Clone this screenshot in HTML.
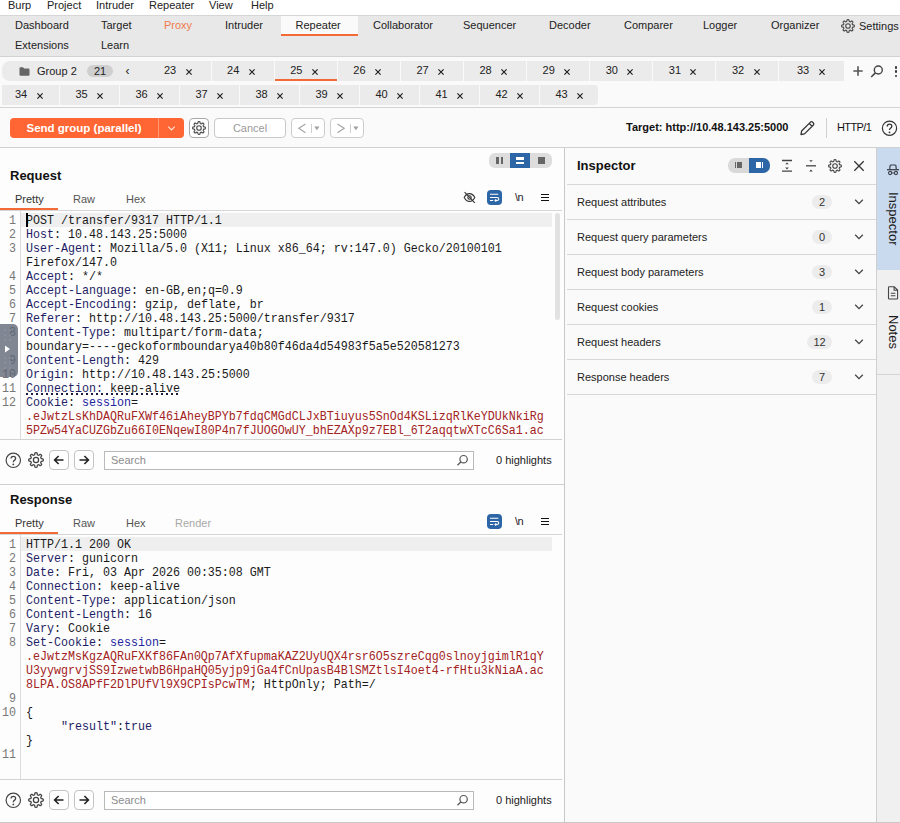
<!DOCTYPE html>
<html><head><meta charset="utf-8">
<style>
*{box-sizing:border-box;margin:0;padding:0}
html,body{width:900px;height:823px;overflow:hidden;background:#fafafa}
body{position:relative;font-family:"Liberation Sans",sans-serif;font-size:11px;color:#222}
.a{position:absolute;white-space:nowrap}
.t{position:absolute;white-space:nowrap;line-height:13px}
#menu{left:0;top:0;width:900px;height:15px;background:#fff}
#maintabs{left:0;top:15px;width:900px;height:42px;background:#e8e8e8;border-top:1px solid #d6d6d6;border-bottom:1px solid #d2d2d2}
#reptabs{left:0;top:57px;width:900px;height:51px;background:#fafafa;border-bottom:1px solid #d4d4d4}
.rt{position:absolute;height:20px;background:#ebebeb}
.rt span{position:absolute;top:3px;font-size:11px;color:#222}
.rt.sel{border-bottom:2px solid #f26a35}
.rt i{position:absolute;top:4px;font-style:normal;font-size:12px;color:#222;margin-left:-0.5px}
#toolbar{left:0;top:108px;width:900px;height:40px;background:#fafafa;border-bottom:1px solid #d0d0d0}
.code{font-family:"Liberation Mono",monospace;font-size:11.67px;line-height:14px;color:#1a1a1a;transform:scaleY(1.05);transform-origin:0 10.1px}
.hn{color:#1e1e66}
.dot{text-decoration:underline dotted #1b1b6b;text-underline-offset:2px}
.sv{color:#2424a0}
.cv{color:#a32222}
.ln{position:absolute;font-family:"Liberation Mono",monospace;font-size:11.67px;line-height:14px;color:#777;text-align:right;width:16px;left:0}
</style></head><body>
<svg width="0" height="0" style="position:absolute">
<symbol id="xx" viewBox="0 0 6 6"><path d="M0.4 0.4 L5.6 5.6 M5.6 0.4 L0.4 5.6" stroke="#1e1e1e" stroke-width="1.15"/></symbol>
<symbol id="gear" viewBox="0 0 24 24"><path d="M12.00 1.10 L12.29 1.11 L12.57 1.13 L12.85 1.16 L13.13 1.24 L13.40 1.39 L13.63 1.73 L13.79 2.34 L13.89 3.12 L13.98 3.74 L14.12 4.08 L14.29 4.25 L14.48 4.36 L14.67 4.45 L14.87 4.53 L15.06 4.61 L15.25 4.69 L15.45 4.77 L15.65 4.84 L15.86 4.90 L16.10 4.90 L16.44 4.76 L16.94 4.39 L17.57 3.90 L18.11 3.58 L18.51 3.51 L18.81 3.59 L19.06 3.74 L19.29 3.91 L19.50 4.10 L19.71 4.29 L19.90 4.50 L20.09 4.71 L20.26 4.94 L20.41 5.19 L20.49 5.49 L20.42 5.89 L20.10 6.43 L19.61 7.06 L19.24 7.56 L19.10 7.90 L19.10 8.14 L19.16 8.35 L19.23 8.55 L19.31 8.75 L19.39 8.94 L19.47 9.13 L19.55 9.33 L19.64 9.52 L19.75 9.71 L19.92 9.88 L20.26 10.02 L20.88 10.11 L21.66 10.21 L22.27 10.37 L22.61 10.60 L22.76 10.87 L22.84 11.15 L22.87 11.43 L22.89 11.71 L22.90 12.00 L22.89 12.29 L22.87 12.57 L22.84 12.85 L22.76 13.13 L22.61 13.40 L22.27 13.63 L21.66 13.79 L20.88 13.89 L20.26 13.98 L19.92 14.12 L19.75 14.29 L19.64 14.48 L19.55 14.67 L19.47 14.87 L19.39 15.06 L19.31 15.25 L19.23 15.45 L19.16 15.65 L19.10 15.86 L19.10 16.10 L19.24 16.44 L19.61 16.94 L20.10 17.57 L20.42 18.11 L20.49 18.51 L20.41 18.81 L20.26 19.06 L20.09 19.29 L19.90 19.50 L19.71 19.71 L19.50 19.90 L19.29 20.09 L19.06 20.26 L18.81 20.41 L18.51 20.49 L18.11 20.42 L17.57 20.10 L16.94 19.61 L16.44 19.24 L16.10 19.10 L15.86 19.10 L15.65 19.16 L15.45 19.23 L15.25 19.31 L15.06 19.39 L14.87 19.47 L14.67 19.55 L14.48 19.64 L14.29 19.75 L14.12 19.92 L13.98 20.26 L13.89 20.88 L13.79 21.66 L13.63 22.27 L13.40 22.61 L13.13 22.76 L12.85 22.84 L12.57 22.87 L12.29 22.89 L12.00 22.90 L11.71 22.89 L11.43 22.87 L11.15 22.84 L10.87 22.76 L10.60 22.61 L10.37 22.27 L10.21 21.66 L10.11 20.88 L10.02 20.26 L9.88 19.92 L9.71 19.75 L9.52 19.64 L9.33 19.55 L9.13 19.47 L8.94 19.39 L8.75 19.31 L8.55 19.23 L8.35 19.16 L8.14 19.10 L7.90 19.10 L7.56 19.24 L7.06 19.61 L6.43 20.10 L5.89 20.42 L5.49 20.49 L5.19 20.41 L4.94 20.26 L4.71 20.09 L4.50 19.90 L4.29 19.71 L4.10 19.50 L3.91 19.29 L3.74 19.06 L3.59 18.81 L3.51 18.51 L3.58 18.11 L3.90 17.57 L4.39 16.94 L4.76 16.44 L4.90 16.10 L4.90 15.86 L4.84 15.65 L4.77 15.45 L4.69 15.25 L4.61 15.06 L4.53 14.87 L4.45 14.67 L4.36 14.48 L4.25 14.29 L4.08 14.12 L3.74 13.98 L3.12 13.89 L2.34 13.79 L1.73 13.63 L1.39 13.40 L1.24 13.13 L1.16 12.85 L1.13 12.57 L1.11 12.29 L1.10 12.00 L1.11 11.71 L1.13 11.43 L1.16 11.15 L1.24 10.87 L1.39 10.60 L1.73 10.37 L2.34 10.21 L3.12 10.11 L3.74 10.02 L4.08 9.88 L4.25 9.71 L4.36 9.52 L4.45 9.33 L4.53 9.13 L4.61 8.94 L4.69 8.75 L4.77 8.55 L4.84 8.35 L4.90 8.14 L4.90 7.90 L4.76 7.56 L4.39 7.06 L3.90 6.43 L3.58 5.89 L3.51 5.49 L3.59 5.19 L3.74 4.94 L3.91 4.71 L4.10 4.50 L4.29 4.29 L4.50 4.10 L4.71 3.91 L4.94 3.74 L5.19 3.59 L5.49 3.51 L5.89 3.58 L6.43 3.90 L7.06 4.39 L7.56 4.76 L7.90 4.90 L8.14 4.90 L8.35 4.84 L8.55 4.77 L8.75 4.69 L8.94 4.61 L9.13 4.53 L9.33 4.45 L9.52 4.36 L9.71 4.25 L9.88 4.08 L10.02 3.74 L10.11 3.12 L10.21 2.34 L10.37 1.73 L10.60 1.39 L10.87 1.24 L11.15 1.16 L11.43 1.13 L11.71 1.11Z" fill="none" stroke="#444" stroke-width="1.9" stroke-linejoin="round"/><circle cx="12" cy="12" r="3.9" fill="none" stroke="#444" stroke-width="1.9"/></symbol>
</svg>


<!-- menu bar -->
<div class="a" id="menu">
  <div class="t" style="left:8px;top:-1px">Burp</div>
  <div class="t" style="left:47px;top:-1px">Project</div>
  <div class="t" style="left:96px;top:-1px">Intruder</div>
  <div class="t" style="left:149px;top:-1px">Repeater</div>
  <div class="t" style="left:209px;top:-1px">View</div>
  <div class="t" style="left:251px;top:-1px">Help</div>
</div>

<!-- main tabs -->
<div class="a" id="maintabs">
  <div class="a" style="left:281px;top:0;width:77px;height:20px;background:#fafafa;border-bottom:2px solid #f26a35"></div>
  <div class="t" style="left:15px;top:3px">Dashboard</div>
  <div class="t" style="left:101px;top:3px">Target</div>
  <div class="t" style="left:164px;top:3px;color:#f07a4e">Proxy</div>
  <div class="t" style="left:225px;top:3px">Intruder</div>
  <div class="t" style="left:295.5px;top:3px">Repeater</div>
  <div class="t" style="left:373px;top:3px">Collaborator</div>
  <div class="t" style="left:463px;top:3px">Sequencer</div>
  <div class="t" style="left:549px;top:3px">Decoder</div>
  <div class="t" style="left:624px;top:3px">Comparer</div>
  <div class="t" style="left:703px;top:3px">Logger</div>
  <div class="t" style="left:771px;top:3px">Organizer</div>
  <div class="t" style="left:859px;top:4px">Settings</div>
  <div class="t" style="left:15px;top:23px">Extensions</div>
  <div class="t" style="left:101px;top:23px">Learn</div>
</div>

<!-- repeater tabs -->
<div class="a" id="reptabs"></div>
<div class="rt" style="left:2px;top:61px;width:146.5px;border-radius:8px 0 0 8px">
  <svg class="a" style="left:17px;top:6px" width="11" height="9" viewBox="0 0 11 9"><path d="M0.5 1.2 Q0.5 0.3 1.4 0.3 L4 0.3 L5.2 1.6 L9.6 1.6 Q10.5 1.6 10.5 2.5 L10.5 8 Q10.5 8.8 9.6 8.8 L1.4 8.8 Q0.5 8.8 0.5 8 Z" fill="#666"/></svg>
  <span style="left:35px;top:4px">Group 2</span>
  <div class="a" style="left:85px;top:4px;width:26px;height:12px;border-radius:6px;background:#cfcfcf"></div>
  <span style="left:92px;top:3.5px">21</span>
  <i style="left:124px;top:3px;font-size:12px">&#8249;</i>
</div>
<div class="rt" style="left:148.5px;top:61px;width:62.1px"><span style="left:15.5px">23</span><svg class="a" style="left:37.2px;top:8px" width="6" height="6"><use href="#xx"/></svg></div>
<div class="rt" style="left:211.6px;top:61px;width:62.1px"><span style="left:15.5px">24</span><svg class="a" style="left:37.2px;top:8px" width="6" height="6"><use href="#xx"/></svg></div>
<div class="rt sel" style="left:274.7px;top:61px;width:62.1px"><span style="left:15.5px">25</span><svg class="a" style="left:37.2px;top:8px" width="6" height="6"><use href="#xx"/></svg></div>
<div class="rt" style="left:337.8px;top:61px;width:62.1px"><span style="left:15.5px">26</span><svg class="a" style="left:37.2px;top:8px" width="6" height="6"><use href="#xx"/></svg></div>
<div class="rt" style="left:400.9px;top:61px;width:62.1px"><span style="left:15.5px">27</span><svg class="a" style="left:37.2px;top:8px" width="6" height="6"><use href="#xx"/></svg></div>
<div class="rt" style="left:464.0px;top:61px;width:62.1px"><span style="left:15.5px">28</span><svg class="a" style="left:37.2px;top:8px" width="6" height="6"><use href="#xx"/></svg></div>
<div class="rt" style="left:527.1px;top:61px;width:62.1px"><span style="left:15.5px">29</span><svg class="a" style="left:37.2px;top:8px" width="6" height="6"><use href="#xx"/></svg></div>
<div class="rt" style="left:590.2px;top:61px;width:62.1px"><span style="left:15.5px">30</span><svg class="a" style="left:37.2px;top:8px" width="6" height="6"><use href="#xx"/></svg></div>
<div class="rt" style="left:653.3px;top:61px;width:62.1px"><span style="left:15.5px">31</span><svg class="a" style="left:37.2px;top:8px" width="6" height="6"><use href="#xx"/></svg></div>
<div class="rt" style="left:716.4px;top:61px;width:62.1px"><span style="left:15.5px">32</span><svg class="a" style="left:37.2px;top:8px" width="6" height="6"><use href="#xx"/></svg></div>
<div class="rt" style="left:779px;top:61px;width:65px"><span style="left:18px">33</span><svg class="a" style="left:40.2px;top:8px" width="6" height="6"><use href="#xx"/></svg></div>
<div class="rt" style="left:2px;top:85px;width:57px"><span style="left:13px">34</span><svg class="a" style="left:35.2px;top:8px" width="6" height="6"><use href="#xx"/></svg></div>
<div class="rt" style="left:60px;top:85px;width:59px"><span style="left:15.5px">35</span><svg class="a" style="left:37.2px;top:8px" width="6" height="6"><use href="#xx"/></svg></div>
<div class="rt" style="left:120px;top:85px;width:59px"><span style="left:15.5px">36</span><svg class="a" style="left:37.2px;top:8px" width="6" height="6"><use href="#xx"/></svg></div>
<div class="rt" style="left:180px;top:85px;width:59px"><span style="left:15.5px">37</span><svg class="a" style="left:37.2px;top:8px" width="6" height="6"><use href="#xx"/></svg></div>
<div class="rt" style="left:240px;top:85px;width:59px"><span style="left:15.5px">38</span><svg class="a" style="left:37.2px;top:8px" width="6" height="6"><use href="#xx"/></svg></div>
<div class="rt" style="left:300px;top:85px;width:59px"><span style="left:15.5px">39</span><svg class="a" style="left:37.2px;top:8px" width="6" height="6"><use href="#xx"/></svg></div>
<div class="rt" style="left:360px;top:85px;width:59px"><span style="left:15.5px">40</span><svg class="a" style="left:37.2px;top:8px" width="6" height="6"><use href="#xx"/></svg></div>
<div class="rt" style="left:420px;top:85px;width:59px"><span style="left:15.5px">41</span><svg class="a" style="left:37.2px;top:8px" width="6" height="6"><use href="#xx"/></svg></div>
<div class="rt" style="left:480px;top:85px;width:59px"><span style="left:15.5px">42</span><svg class="a" style="left:37.2px;top:8px" width="6" height="6"><use href="#xx"/></svg></div>
<div class="rt" style="left:540px;top:85px;width:58px;border-radius:0 4px 4px 0"><span style="left:15.5px">43</span><svg class="a" style="left:37.2px;top:8px" width="6" height="6"><use href="#xx"/></svg></div>
<svg class="a" style="left:853px;top:66px" width="10" height="10" viewBox="0 0 10 10"><path d="M5 0.3 V9.7 M0.3 5 H9.7" stroke="#555" stroke-width="1.6"/></svg>
<svg class="a" style="left:870px;top:65px" width="14" height="13" viewBox="0 0 14 13"><circle cx="8.3" cy="5" r="4" fill="none" stroke="#444" stroke-width="1.4"/><path d="M5.4 7.9 L1.2 12" stroke="#444" stroke-width="1.5"/></svg>
<div class="a" style="left:894.5px;top:66px;width:2.6px;height:2.6px;border-radius:2px;background:#333"></div>
<div class="a" style="left:894.5px;top:70.3px;width:2.6px;height:2.6px;border-radius:2px;background:#333"></div>
<div class="a" style="left:894.5px;top:74.6px;width:2.6px;height:2.6px;border-radius:2px;background:#333"></div>


<!-- toolbar -->
<div class="a" id="toolbar"></div>
<div class="a" style="left:10px;top:118px;width:174px;height:20px;background:#ff6633;border-radius:4px"></div>
<div class="a" style="left:158px;top:118px;width:1px;height:20px;background:#ff9a70"></div>
<div class="t" style="left:26.5px;top:122px;color:#fff;font-weight:bold;font-size:11.5px">Send group (parallel)</div>
<svg class="a" style="left:167px;top:125px" width="9" height="7" viewBox="0 0 9 7"><path d="M1.3 1.7 L4.5 4.9 L7.7 1.7" fill="none" stroke="#ffe8dc" stroke-width="1.1"/></svg>
<div class="a" style="left:189px;top:118px;width:20px;height:20px;border:1px solid #a8a8a8;border-radius:4px;background:#fff"></div>
<svg class="a" style="left:192px;top:121px" width="14" height="14"><use href="#gear"/></svg>
<div class="a" style="left:214px;top:118px;width:72px;height:20px;border:1px solid #c8c8c8;border-radius:4px;background:#fff"></div>
<div class="t" style="left:214px;top:122px;width:72px;text-align:center;color:#9a9a9a">Cancel</div>
<div class="a" style="left:291px;top:118px;width:34px;height:20px;border:1px solid #cdcdcd;border-radius:4px;background:#fff"></div>
<svg class="a" style="left:297px;top:123px" width="10" height="11" viewBox="0 0 10 11"><path d="M8.5 1 L1.8 5.3 L8.5 9.7" fill="none" stroke="#a6a6a6" stroke-width="1.2"/></svg>
<div class="a" style="left:311px;top:124px;width:1px;height:9px;background:#cfcfcf"></div>
<svg class="a" style="left:314px;top:126px" width="6" height="5" viewBox="0 0 6 5"><path d="M0.3 0.5 L5.5 0.5 L2.9 4.2Z" fill="#a0a0a0"/></svg>
<div class="a" style="left:330px;top:118px;width:34px;height:20px;border:1px solid #cdcdcd;border-radius:4px;background:#fff"></div>
<svg class="a" style="left:336px;top:123px" width="10" height="11" viewBox="0 0 10 11"><path d="M1.5 1 L8.2 5.3 L1.5 9.7" fill="none" stroke="#a6a6a6" stroke-width="1.2"/></svg>
<div class="a" style="left:350px;top:124px;width:1px;height:9px;background:#cfcfcf"></div>
<svg class="a" style="left:353px;top:126px" width="6" height="5" viewBox="0 0 6 5"><path d="M0.3 0.5 L5.5 0.5 L2.9 4.2Z" fill="#a0a0a0"/></svg>
<div class="t" style="left:626px;top:121px;font-weight:bold;color:#111">Target: http://10.48.143.25:5000</div>
<svg class="a" style="left:799px;top:120px" width="17" height="16" viewBox="0 0 17 16"><path d="M2 14.5 L2.6 11 L11.5 2.1 Q12.5 1.2 13.5 2.1 L14.4 3 Q15.3 4 14.4 5 L5.5 13.9 Z M10.2 3.4 L13.1 6.3" fill="none" stroke="#333" stroke-width="1.3" stroke-linejoin="round"/></svg>
<div class="a" style="left:826px;top:118px;width:1px;height:20px;background:#d0d0d0"></div>
<div class="t" style="left:837px;top:121px;color:#111;letter-spacing:-0.6px">HTTP/1</div>
<svg class="a" style="left:881px;top:120px" width="17" height="17" viewBox="0 0 17 17"><circle cx="8.5" cy="8.2" r="7.1" fill="none" stroke="#333" stroke-width="1.2"/><path d="M6.2 6.4 Q6.2 4.2 8.5 4.2 Q10.8 4.2 10.8 6.3 Q10.8 7.6 9.5 8.3 Q8.5 8.9 8.5 10" fill="none" stroke="#333" stroke-width="1.3"/><circle cx="8.5" cy="12.3" r="0.9" fill="#333"/></svg>



<div class="a" style="left:564px;top:148px;width:1px;height:675px;background:#c8c8c8"></div>
<div class="a" style="left:0;top:148px;width:564px;height:336px;background:#fdfdfd"></div>
<div class="a" style="left:0;top:485px;width:564px;height:337px;background:#fdfdfd"></div>
<div class="a" style="left:0;top:484px;width:564px;height:1px;background:#d0d0d0"></div>
<div class="a" style="left:0;top:822px;width:900px;height:1px;background:#c8c8c8"></div>
<!-- layout toggle -->
<div class="a" style="left:489px;top:153px;width:63px;height:15px;border-radius:6px;background:#dddddd;overflow:hidden"><div class="a" style="left:21px;top:0;width:20px;height:15px;background:#2c66a6"></div></div>
<div class="a" style="left:496px;top:157px;width:2.5px;height:7px;background:#666"></div>
<div class="a" style="left:500.5px;top:157px;width:2.5px;height:7px;background:#666"></div>
<div class="a" style="left:516px;top:157px;width:8px;height:2.5px;background:#fff"></div>
<div class="a" style="left:516px;top:161.5px;width:8px;height:2.5px;background:#fff"></div>
<div class="a" style="left:538px;top:157px;width:7px;height:7px;background:#666"></div>
<div class="t" style="left:10px;top:168px;font-size:13px;font-weight:bold;color:#111;line-height:15px">Request</div>
<div class="t" style="left:15px;top:193px;color:#333">Pretty</div>
<div class="t" style="left:73px;top:193px;color:#555">Raw</div>
<div class="t" style="left:126px;top:193px;color:#555">Hex</div>
<div class="a" style="left:0;top:208px;width:58px;height:2px;background:#f26a35"></div>
<div class="a" style="left:0;top:210px;width:562px;height:1px;background:#d6d6d6"></div>
<svg class="a" style="left:463px;top:191px" width="13" height="13" viewBox="0 0 13 13"><path d="M1.2 6.5 Q3.2 2.6 6.5 2.6 Q9.8 2.6 11.8 6.5 Q9.8 10.4 6.5 10.4 Q3.2 10.4 1.2 6.5Z" fill="none" stroke="#333" stroke-width="1.1"/><circle cx="6.5" cy="6.5" r="1.7" fill="none" stroke="#333" stroke-width="1.1"/><path d="M1.6 1.2 L11.8 11.8" stroke="#333" stroke-width="1.1"/></svg>

<div class="a" style="left:487px;top:190px;width:15px;height:15px;border-radius:4px;background:#2c66a6"></div>
<svg class="a" style="left:487px;top:190px" width="15" height="15" viewBox="0 0 15 15"><path d="M3 4.3 H11.3 M3 7.5 H10 Q11.8 7.5 11.8 9 Q11.8 10.5 10 10.5 H8 M9.2 9.3 L8 10.5 L9.2 11.7 M3 10.5 H6.2" fill="none" stroke="#fff" stroke-width="1.1"/></svg>
<div class="t" style="left:515px;top:191px;color:#222;font-size:11px;letter-spacing:-0.5px">\n</div>
<div class="a" style="left:541px;top:194px;width:7.5px;height:1px;background:#111"></div>
<div class="a" style="left:541px;top:197px;width:7.5px;height:1px;background:#111"></div>
<div class="a" style="left:541px;top:200px;width:7.5px;height:1px;background:#111"></div>
<div class="a" style="left:20px;top:211px;width:1px;height:228px;background:#dcdcdc"></div>
<div class="a" style="left:21px;top:213px;width:531px;height:14px;background:#efefef"></div>
<div class="ln code" style="top:214px">1</div>
<div class="a code" style="left:26px;top:214px;white-space:pre">POST /transfer/9317 HTTP/1.1</div>
<div class="ln code" style="top:228px">2</div>
<div class="a code" style="left:26px;top:228px;white-space:pre"><span class="hn">Host</span>: 10.48.143.25:5000</div>
<div class="ln code" style="top:242px">3</div>
<div class="a code" style="left:26px;top:242px;white-space:pre"><span class="hn">User-Agent</span>: Mozilla/5.0 (X11; Linux x86_64; rv:147.0) Gecko/20100101</div>
<div class="a code" style="left:26px;top:256px;white-space:pre">Firefox/147.0</div>
<div class="ln code" style="top:270px">4</div>
<div class="a code" style="left:26px;top:270px;white-space:pre"><span class="hn">Accept</span>: */*</div>
<div class="ln code" style="top:284px">5</div>
<div class="a code" style="left:26px;top:284px;white-space:pre"><span class="hn">Accept-Language</span>: en-GB,en;q=0.9</div>
<div class="ln code" style="top:298px">6</div>
<div class="a code" style="left:26px;top:298px;white-space:pre"><span class="hn">Accept-Encoding</span>: gzip, deflate, br</div>
<div class="ln code" style="top:312px">7</div>
<div class="a code" style="left:26px;top:312px;white-space:pre"><span class="hn">Referer</span>: http://10.48.143.25:5000/transfer/9317</div>
<div class="ln code" style="top:326px">8</div>
<div class="a code" style="left:26px;top:326px;white-space:pre"><span class="hn">Content-Type</span>: multipart/form-data;</div>
<div class="a code" style="left:26px;top:340px;white-space:pre">boundary=----geckoformboundarya40b80f46da4d54983f5a5e520581273</div>
<div class="ln code" style="top:354px">9</div>
<div class="a code" style="left:26px;top:354px;white-space:pre"><span class="hn">Content-Length</span>: 429</div>
<div class="ln code" style="top:368px">10</div>
<div class="a code" style="left:26px;top:368px;white-space:pre"><span class="hn">Origin</span>: http://10.48.143.25:5000</div>
<div class="ln code" style="top:382px">11</div>
<div class="a code" style="left:26px;top:382px;white-space:pre"><span class="hn">Connection:</span> keep-alive</div>
<div class="a" style="left:26px;top:393px;width:154px;height:2px;background:repeating-linear-gradient(90deg,#1c1c40 0 2px,transparent 2px 5px)"></div>
<div class="ln code" style="top:396px">12</div>
<div class="a code" style="left:26px;top:396px;white-space:pre"><span class="hn">Cookie</span>: <span class="sv">session</span>=</div>
<div class="a code" style="left:26px;top:410px;white-space:pre"><span class="cv">.eJwtzLsKhDAQRuFXWf46iAheyBPYb7fdqCMGdCLJxBTiuyus5SnOd4KSLizqRlKeYDUkNkiRg</span></div>
<div class="a code" style="left:26px;top:424px;white-space:pre"><span class="cv">5PZw54YaCUZGbZu66I0ENqewI80P4n7fJUOGOwUY_bhEZAXp9z7EBl_6T2aqqtwXTcC6Sa1.ac</span></div>

<div class="a" style="left:555px;top:213px;width:5px;height:107px;border-radius:3px;background:#e2e2e2"></div>

<div class="a" style="left:0;top:439px;width:562px;height:1px;background:#d2d2d2"></div>
<svg class="a" style="left:5px;top:452px" width="17" height="17" viewBox="0 0 17 17"><circle cx="8.3" cy="8.3" r="7.2" fill="none" stroke="#444" stroke-width="1.2"/><path d="M6 6.6 Q6 4.3 8.3 4.3 Q10.6 4.3 10.6 6.4 Q10.6 7.7 9.3 8.4 Q8.3 9 8.3 10.2" fill="none" stroke="#444" stroke-width="1.3"/><circle cx="8.3" cy="12.4" r="0.9" fill="#444"/></svg>
<svg class="a" style="left:27.6px;top:452.2px" width="16" height="16"><use href="#gear"/></svg>
<div class="a" style="left:49px;top:450px;width:20px;height:20px;border:1px solid #c4c4c4;border-radius:4px;background:#fff"></div>
<svg class="a" style="left:52px;top:453px" width="14" height="14" viewBox="0 0 14 14"><path d="M11.5 7 L2.6 7 M6.6 3 L2.6 7 L6.6 11" fill="none" stroke="#222" stroke-width="1.6"/></svg>
<div class="a" style="left:74px;top:450px;width:20px;height:20px;border:1px solid #c4c4c4;border-radius:4px;background:#fff"></div>
<svg class="a" style="left:77px;top:453px" width="14" height="14" viewBox="0 0 14 14"><path d="M2.5 7 L11.4 7 M7.4 3 L11.4 7 L7.4 11" fill="none" stroke="#222" stroke-width="1.6"/></svg>
<div class="a" style="left:104px;top:451px;width:370px;height:19px;border:1px solid #b9b9b9;background:#fff"></div>
<div class="t" style="left:111px;top:454px;color:#8c8c8c">Search</div>
<svg class="a" style="left:456px;top:454px" width="13" height="13" viewBox="0 0 13 13"><circle cx="7.6" cy="5.2" r="3.7" fill="none" stroke="#555" stroke-width="1.2"/><path d="M5 7.8 L1.5 11.3" stroke="#555" stroke-width="1.3"/></svg>
<div class="t" style="left:496px;top:454px;color:#222">0 highlights</div>

<div class="t" style="left:10px;top:492px;font-size:13px;font-weight:bold;color:#111;line-height:15px">Response</div>
<div class="t" style="left:15px;top:517px;color:#333">Pretty</div>
<div class="t" style="left:73px;top:517px;color:#555">Raw</div>
<div class="t" style="left:126px;top:517px;color:#555">Hex</div>
<div class="t" style="left:175px;top:517px;color:#a8a8a8">Render</div>
<div class="a" style="left:0;top:532px;width:58px;height:2px;background:#f26a35"></div>
<div class="a" style="left:0;top:534px;width:562px;height:1px;background:#d6d6d6"></div>

<div class="a" style="left:487px;top:514px;width:15px;height:15px;border-radius:4px;background:#2c66a6"></div>
<svg class="a" style="left:487px;top:514px" width="15" height="15" viewBox="0 0 15 15"><path d="M3 4.3 H11.3 M3 7.5 H10 Q11.8 7.5 11.8 9 Q11.8 10.5 10 10.5 H8 M9.2 9.3 L8 10.5 L9.2 11.7 M3 10.5 H6.2" fill="none" stroke="#fff" stroke-width="1.1"/></svg>
<div class="t" style="left:515px;top:515px;color:#222;font-size:11px;letter-spacing:-0.5px">\n</div>
<div class="a" style="left:541px;top:518px;width:7.5px;height:1px;background:#111"></div>
<div class="a" style="left:541px;top:521px;width:7.5px;height:1px;background:#111"></div>
<div class="a" style="left:541px;top:524px;width:7.5px;height:1px;background:#111"></div>
<div class="a" style="left:20px;top:535px;width:1px;height:244px;background:#dcdcdc"></div>
<div class="a" style="left:21px;top:537px;width:531px;height:14px;background:#efefef"></div>
<div class="ln code" style="top:538px">1</div>
<div class="a code" style="left:26px;top:538px;white-space:pre">HTTP/1.1 200 OK</div>
<div class="ln code" style="top:552px">2</div>
<div class="a code" style="left:26px;top:552px;white-space:pre"><span class="hn">Server</span>: gunicorn</div>
<div class="ln code" style="top:566px">3</div>
<div class="a code" style="left:26px;top:566px;white-space:pre"><span class="hn">Date</span>: Fri, 03 Apr 2026 00:35:08 GMT</div>
<div class="ln code" style="top:580px">4</div>
<div class="a code" style="left:26px;top:580px;white-space:pre"><span class="hn">Connection</span>: keep-alive</div>
<div class="ln code" style="top:594px">5</div>
<div class="a code" style="left:26px;top:594px;white-space:pre"><span class="hn">Content-Type</span>: application/json</div>
<div class="ln code" style="top:608px">6</div>
<div class="a code" style="left:26px;top:608px;white-space:pre"><span class="hn">Content-Length</span>: 16</div>
<div class="ln code" style="top:622px">7</div>
<div class="a code" style="left:26px;top:622px;white-space:pre"><span class="hn">Vary</span>: Cookie</div>
<div class="ln code" style="top:636px">8</div>
<div class="a code" style="left:26px;top:636px;white-space:pre"><span class="hn">Set-Cookie</span>: <span class="sv">session</span>=</div>
<div class="a code" style="left:26px;top:650px;white-space:pre"><span class="cv">.eJwtzMsKgzAQRuFXKf86FAn0Qp7AfXfupmaKAZ2UyUQX4rsr6O5szreCqg0slnoyjgimlR1qY</span></div>
<div class="a code" style="left:26px;top:664px;white-space:pre"><span class="cv">U3yywgrvjSS9IzwetwbB6HpaHQ05yjp9jGa4fCnUpasB4BlSMZtlsI4oet4-rfHtu3kNiaA.ac</span></div>
<div class="a code" style="left:26px;top:678px;white-space:pre"><span class="cv">8LPA.OS8APfF2DlPUfVl9X9CPIsPcwTM</span>; HttpOnly; Path=/</div>
<div class="ln code" style="top:692px">9</div>
<div class="a code" style="left:26px;top:692px;white-space:pre"></div>
<div class="ln code" style="top:706px">10</div>
<div class="a code" style="left:26px;top:706px;white-space:pre">{</div>
<div class="a code" style="left:26px;top:720px;white-space:pre">     <span class="hn">"result"</span>:<span class="hn">true</span></div>
<div class="a code" style="left:26px;top:734px;white-space:pre">}</div>
<div class="ln code" style="top:748px">11</div>
<div class="a code" style="left:26px;top:748px;white-space:pre"></div>

<div class="a" style="left:0;top:779px;width:562px;height:1px;background:#d2d2d2"></div>
<svg class="a" style="left:5px;top:792px" width="17" height="17" viewBox="0 0 17 17"><circle cx="8.3" cy="8.3" r="7.2" fill="none" stroke="#444" stroke-width="1.2"/><path d="M6 6.6 Q6 4.3 8.3 4.3 Q10.6 4.3 10.6 6.4 Q10.6 7.7 9.3 8.4 Q8.3 9 8.3 10.2" fill="none" stroke="#444" stroke-width="1.3"/><circle cx="8.3" cy="12.4" r="0.9" fill="#444"/></svg>
<svg class="a" style="left:27.6px;top:792.2px" width="16" height="16"><use href="#gear"/></svg>
<div class="a" style="left:49px;top:790px;width:20px;height:20px;border:1px solid #c4c4c4;border-radius:4px;background:#fff"></div>
<svg class="a" style="left:52px;top:793px" width="14" height="14" viewBox="0 0 14 14"><path d="M11.5 7 L2.6 7 M6.6 3 L2.6 7 L6.6 11" fill="none" stroke="#222" stroke-width="1.6"/></svg>
<div class="a" style="left:74px;top:790px;width:20px;height:20px;border:1px solid #c4c4c4;border-radius:4px;background:#fff"></div>
<svg class="a" style="left:77px;top:793px" width="14" height="14" viewBox="0 0 14 14"><path d="M2.5 7 L11.4 7 M7.4 3 L11.4 7 L7.4 11" fill="none" stroke="#222" stroke-width="1.6"/></svg>
<div class="a" style="left:104px;top:791px;width:370px;height:19px;border:1px solid #b9b9b9;background:#fff"></div>
<div class="t" style="left:111px;top:794px;color:#8c8c8c">Search</div>
<svg class="a" style="left:456px;top:794px" width="13" height="13" viewBox="0 0 13 13"><circle cx="7.6" cy="5.2" r="3.7" fill="none" stroke="#555" stroke-width="1.2"/><path d="M5 7.8 L1.5 11.3" stroke="#555" stroke-width="1.3"/></svg>
<div class="t" style="left:496px;top:794px;color:#222">0 highlights</div>


<div class="a" style="left:565px;top:148px;width:311px;height:674px;background:#fafafa"></div>
<div class="a" style="left:876px;top:148px;width:1px;height:674px;background:#cfcfcf"></div>
<div class="a" style="left:877px;top:148px;width:23px;height:674px;background:#f1f0f1"></div>
<div class="a" style="left:877px;top:148px;width:23px;height:122px;background:#c9daef"></div>
<div class="a" style="left:877px;top:374px;width:23px;height:1px;background:#d4d4d4"></div>
<svg class="a" style="left:886px;top:164px" width="14" height="12" viewBox="0 0 14 12"><path d="M3.7 5.4 L4.1 1.7 Q4.3 1 5.1 1 L8.9 1 Q9.7 1 9.9 1.7 L10.3 5.4" fill="none" stroke="#3a3f48" stroke-width="1.2"/><path d="M1 5.7 H13" stroke="#3a3f48" stroke-width="1.3"/><circle cx="4.1" cy="9" r="1.6" fill="none" stroke="#3a3f48" stroke-width="1.1"/><circle cx="9.9" cy="9" r="1.6" fill="none" stroke="#3a3f48" stroke-width="1.1"/><path d="M5.7 9 H8.3" stroke="#3a3f48" stroke-width="0.9"/></svg>
<div class="t" style="left:893px;top:192px;transform-origin:0 0;transform:rotate(90deg) translate(0,-7px);font-size:13px;color:#1a1a1a">Inspector</div>
<svg class="a" style="left:887px;top:286px" width="12" height="14" viewBox="0 0 12 14"><path d="M1.5 1.5 Q1.5 0.8 2.2 0.8 L7.3 0.8 L10.6 4.1 L10.6 12.3 Q10.6 13 9.9 13 L2.2 13 Q1.5 13 1.5 12.3Z M7.1 0.9 L7.1 4.3 L10.5 4.3 M3.8 7.2 H8.4 M3.8 9.8 H8.4" fill="none" stroke="#444" stroke-width="1.1"/></svg>
<div class="t" style="left:893px;top:315px;transform-origin:0 0;transform:rotate(90deg) translate(0,-7px);font-size:13px;color:#1a1a1a">Notes</div>

<div class="t" style="left:577px;top:158px;font-size:13px;font-weight:bold;color:#111;line-height:15px">Inspector</div>
<div class="a" style="left:728px;top:158px;width:42px;height:15px;border-radius:7px;background:#d9d9d9;overflow:hidden"><div class="a" style="left:21px;top:0;width:21px;height:15px;background:#2c66a6"></div></div>
<div class="a" style="left:735px;top:162px;width:1px;height:6px;background:#666"></div>
<div class="a" style="left:737px;top:162px;width:5px;height:6px;background:#666"></div>
<div class="a" style="left:756px;top:162px;width:5px;height:6px;background:#fff"></div>
<div class="a" style="left:762px;top:162px;width:1px;height:6px;background:#fff"></div>
<svg class="a" style="left:781px;top:159px" width="12" height="14" viewBox="0 0 12 14"><path d="M1 1.5 H11 M1 12.2 H11" stroke="#444" stroke-width="1.3"/><path d="M4.2 5.2 L6 3.4 L7.8 5.2Z M4.2 8.6 L6 10.4 L7.8 8.6Z" fill="#444"/></svg>
<svg class="a" style="left:805px;top:159px" width="12" height="14" viewBox="0 0 12 14"><path d="M1 6.8 H11" stroke="#444" stroke-width="1.3"/><path d="M4.2 1.2 L6 3 L7.8 1.2Z M4.2 12.4 L6 10.6 L7.8 12.4Z" fill="#444"/></svg>
<svg class="a" style="left:828px;top:159px" width="14" height="14"><use href="#gear"/></svg>
<svg class="a" style="left:853px;top:160px" width="12" height="12" viewBox="0 0 12 12"><path d="M1.3 1.3 L10.7 10.7 M10.7 1.3 L1.3 10.7" stroke="#333" stroke-width="1.3"/></svg>
<div class="a" style="left:567px;top:184px;width:309px;height:1px;background:#d8d8d8"></div>
<div class="t" style="left:577px;top:196px;color:#222">Request attributes</div>
<div class="a" style="left:812px;top:195px;width:20px;height:14px;border-radius:7px;background:#ececec"></div>
<div class="t" style="left:812px;top:196px;width:20px;text-align:center;color:#333">2</div>
<svg class="a" style="left:854px;top:198px" width="10" height="8" viewBox="0 0 10 8"><path d="M1.2 1.8 L5 5.6 L8.8 1.8" fill="none" stroke="#444" stroke-width="1.3"/></svg>
<div class="a" style="left:567px;top:219px;width:309px;height:1px;background:#d8d8d8"></div>
<div class="t" style="left:577px;top:231px;color:#222">Request query parameters</div>
<div class="a" style="left:812px;top:230px;width:20px;height:14px;border-radius:7px;background:#ececec"></div>
<div class="t" style="left:812px;top:231px;width:20px;text-align:center;color:#333">0</div>
<svg class="a" style="left:854px;top:233px" width="10" height="8" viewBox="0 0 10 8"><path d="M1.2 1.8 L5 5.6 L8.8 1.8" fill="none" stroke="#444" stroke-width="1.3"/></svg>
<div class="a" style="left:567px;top:254px;width:309px;height:1px;background:#d8d8d8"></div>
<div class="t" style="left:577px;top:266px;color:#222">Request body parameters</div>
<div class="a" style="left:812px;top:265px;width:20px;height:14px;border-radius:7px;background:#ececec"></div>
<div class="t" style="left:812px;top:266px;width:20px;text-align:center;color:#333">3</div>
<svg class="a" style="left:854px;top:268px" width="10" height="8" viewBox="0 0 10 8"><path d="M1.2 1.8 L5 5.6 L8.8 1.8" fill="none" stroke="#444" stroke-width="1.3"/></svg>
<div class="a" style="left:567px;top:289px;width:309px;height:1px;background:#d8d8d8"></div>
<div class="t" style="left:577px;top:301px;color:#222">Request cookies</div>
<div class="a" style="left:812px;top:300px;width:20px;height:14px;border-radius:7px;background:#ececec"></div>
<div class="t" style="left:812px;top:301px;width:20px;text-align:center;color:#333">1</div>
<svg class="a" style="left:854px;top:303px" width="10" height="8" viewBox="0 0 10 8"><path d="M1.2 1.8 L5 5.6 L8.8 1.8" fill="none" stroke="#444" stroke-width="1.3"/></svg>
<div class="a" style="left:567px;top:324px;width:309px;height:1px;background:#d8d8d8"></div>
<div class="t" style="left:577px;top:336px;color:#222">Request headers</div>
<div class="a" style="left:807px;top:335px;width:25px;height:14px;border-radius:7px;background:#ececec"></div>
<div class="t" style="left:807px;top:336px;width:25px;text-align:center;color:#333">12</div>
<svg class="a" style="left:854px;top:338px" width="10" height="8" viewBox="0 0 10 8"><path d="M1.2 1.8 L5 5.6 L8.8 1.8" fill="none" stroke="#444" stroke-width="1.3"/></svg>
<div class="a" style="left:567px;top:359px;width:309px;height:1px;background:#d8d8d8"></div>
<div class="t" style="left:577px;top:371px;color:#222">Response headers</div>
<div class="a" style="left:812px;top:370px;width:20px;height:14px;border-radius:7px;background:#ececec"></div>
<div class="t" style="left:812px;top:371px;width:20px;text-align:center;color:#333">7</div>
<svg class="a" style="left:854px;top:373px" width="10" height="8" viewBox="0 0 10 8"><path d="M1.2 1.8 L5 5.6 L8.8 1.8" fill="none" stroke="#444" stroke-width="1.3"/></svg>
<div class="a" style="left:567px;top:394px;width:309px;height:1px;background:#d8d8d8"></div>
<svg class="a" style="left:841px;top:19px" width="14" height="14"><use href="#gear"/></svg>
<!-- caret -->
<div class="a" style="left:26px;top:213px;width:2px;height:14px;background:#000"></div>
<!-- overlay handle -->
<div class="a" style="left:0;top:324px;width:18px;height:53px;border-radius:0 5px 5px 0;background:rgba(92,100,115,0.78)"></div>
<svg class="a" style="left:0;top:324px" width="18" height="53" viewBox="0 0 18 53"><g fill="#8d95a3"><circle cx="5" cy="6" r="0.9"/><circle cx="10" cy="6" r="0.9"/><circle cx="5" cy="11" r="0.9"/><circle cx="10" cy="11" r="0.9"/><circle cx="5" cy="16" r="0.9"/><circle cx="10" cy="16" r="0.9"/><circle cx="5" cy="34" r="0.9"/><circle cx="10" cy="34" r="0.9"/><circle cx="5" cy="39" r="0.9"/><circle cx="10" cy="39" r="0.9"/><circle cx="5" cy="44" r="0.9"/><circle cx="10" cy="44" r="0.9"/></g><path d="M5 21.5 L10 25 L5 28.5Z" fill="#fff"/></svg>

</body></html>
